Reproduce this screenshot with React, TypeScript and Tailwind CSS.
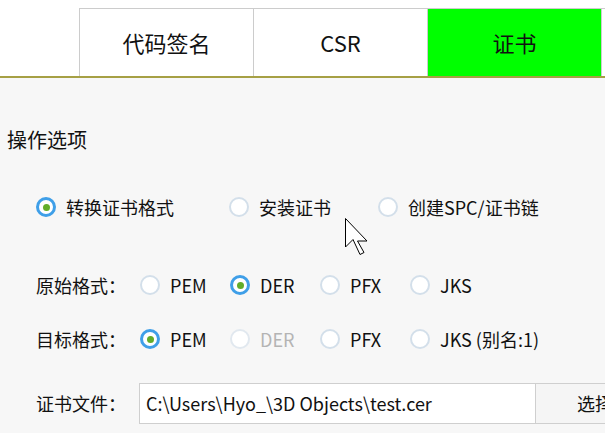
import React from 'react';

const FONT = { fontFamily: '"Noto Sans CJK SC", "Noto Sans", sans-serif' };

function Radio({ checked, disabled }: { checked?: boolean; disabled?: boolean }) {
  if (checked) {
    return (
      <span className="flex h-[20px] w-[20px] shrink-0 items-center justify-center rounded-full border-[3px] border-[#3f9fe8] bg-white">
        <span className="h-[7px] w-[7px] rounded-full bg-[#62ad2a]" />
      </span>
    );
  }
  return (
    <span
      className={`h-[20px] w-[20px] shrink-0 rounded-full border-2 bg-white ${
        disabled ? 'border-[#e1e8ef]' : 'border-[#d3dfea]'
      }`}
    />
  );
}

function Option({
  label,
  checked,
  disabled,
  width
}: {
  label: string;
  checked?: boolean;
  disabled?: boolean;
  width: string;
}) {
  return (
    <div className={`flex items-center gap-[10px] ${width}`}>
      <Radio checked={checked} disabled={disabled} />
      <span className={disabled ? 'text-[#b4b4b4]' : 'text-[#111]'}>{label}</span>
    </div>
  );
}

function Cursor() {
  return (
    <svg className="absolute left-[345px] top-[218px]" width="24" height="38" viewBox="0 0 24 38">
      <path
        d="M0.5 0.5 L0.5 29 L8 21.5 L15 36.5 L19 34.5 L12.5 23 L22 23 Z"
        fill="white"
        stroke="black"
        strokeWidth="1"
        strokeLinejoin="miter"
      />
    </svg>
  );
}

export default function App() {
  const tabs = [
    { name: '代码签名', active: false },
    { name: 'CSR', active: false },
    { name: '证书', active: true }
  ];

  return (
    <div className="relative h-[433px] w-[605px] overflow-hidden bg-[#f7f7f7] text-[18px]" style={FONT}>
      {/* tab strip */}
      <div className="flex h-[76px] items-end bg-white pl-[79px]">
        {tabs.map((tab) => (
          <div
            key={tab.name}
            className={`-mr-px flex h-[68px] w-[175px] shrink-0 items-center justify-center border border-b-0 border-[#cccccc] text-[22px] text-[#111] ${
              tab.active ? 'bg-[#00ff00]' : 'bg-white'
            }`}
          >
            {tab.name}
          </div>
        ))}
        <div className="h-[68px] w-[20px] shrink-0 border border-b-0 border-[#cccccc] bg-white" />
      </div>
      <div className="h-[2px] bg-[#a6a044]" />

      <div className="flex flex-col">
        <div className="mt-[47px] flex h-[30px] items-center pl-[7px] text-[20px] text-[#111]">操作选项</div>

        <div className="mt-[37px] flex h-[30px] items-center pl-[36px]">
          <Option label="转换证书格式" checked width="w-[193px]" />
          <Option label="安装证书" width="w-[149px]" />
          <Option label="创建SPC/证书链" width="w-[190px]" />
        </div>

        <div className="mt-[48px] flex h-[30px] items-center pl-[36px]">
          <span className="w-[104px] text-[#111]">原始格式：</span>
          <Option label="PEM" width="w-[90px]" />
          <Option label="DER" checked width="w-[90px]" />
          <Option label="PFX" width="w-[90px]" />
          <Option label="JKS" width="w-[120px]" />
        </div>

        <div className="mt-[24px] flex h-[30px] items-center pl-[36px]">
          <span className="w-[104px] text-[#111]">目标格式：</span>
          <Option label="PEM" checked width="w-[90px]" />
          <Option label="DER" disabled width="w-[90px]" />
          <Option label="PFX" width="w-[90px]" />
          <Option label="JKS (别名:1)" width="w-[140px]" />
        </div>

        <div className="mt-[29px] flex h-[41px] items-stretch pl-[36px]">
          <span className="flex w-[103px] shrink-0 items-center text-[#111]">证书文件：</span>
          <div className="flex w-[397px] shrink-0 items-center border border-[#cfcfcf] bg-white pl-[6px] text-[#111]">
            C:\Users\Hyo_\3D Objects\test.cer
          </div>
          <div className="-ml-px flex w-[120px] shrink-0 items-center justify-center border border-[#cfcfcf] bg-[#f5f5f5] text-[#111]">
            选择
          </div>
        </div>
      </div>

      <Cursor />
    </div>
  );
}
